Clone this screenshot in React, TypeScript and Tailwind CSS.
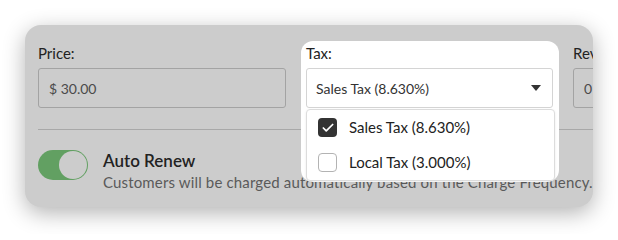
import { Check } from "lucide-react";

function Field({ label, value }: { label: string; value: string }) {
  return (
    <div className="w-[248px] shrink-0">
      <div className="h-[20px] mb-[5px] text-[15px] leading-[20px] text-[#222222]">{label}</div>
      <div className="h-[40px] flex items-center px-[10px] border border-[#a3a3a3] rounded-[3px] text-[14px] text-[#4a4a4a]">
        {value}
      </div>
    </div>
  );
}

function Option({ label, checked }: { label: string; checked?: boolean }) {
  return (
    <div className="h-[35px] flex items-center gap-[12px] pl-[11px]">
      {checked ? (
        <span className="w-[19px] h-[19px] rounded-[4px] bg-[#333333] flex items-center justify-center">
          <Check size={14} strokeWidth={3} className="text-white" />
        </span>
      ) : (
        <span className="w-[19px] h-[19px] rounded-[4px] border border-[#b3b3b3] bg-white" />
      )}
      <span className="text-[15px] text-[#222222]">{label}</span>
    </div>
  );
}

export default function App() {
  return (
    <div className="w-[618px] h-[234px] bg-white pt-[25px] pl-[25px] font-['Lato',sans-serif]">
      <div className="w-[568px] h-[182px] overflow-hidden rounded-[16px] bg-[#cccccc] shadow-[0_6px_22px_rgba(0,0,0,0.3)] pl-[13px] pt-[18px]">
        <div className="flex gap-[20px]">
          <Field label="Price:" value="$ 30.00" />

          <div className="relative w-[247px] shrink-0">
            <div className="absolute -left-[5px] -top-[2px] w-[258px] h-[141px] rounded-[12px] bg-white" />
            <div className="relative">
              <div className="h-[20px] mb-[5px] text-[15px] leading-[20px] text-[#222222]">Tax:</div>
              <div className="h-[40px] flex items-center justify-between pl-[9px] pr-[11px] border border-[#d4d4d4] rounded-[3px] text-[14px] text-[#333333]">
                <span>Sales Tax (8.630%)</span>
                <svg width="10" height="6" viewBox="0 0 10 6">
                  <path d="M0 0h10L5 6z" fill="#333333" />
                </svg>
              </div>
              <div className="absolute left-0 top-full mt-px w-[249px] h-[72px] rounded-[4px] border border-[#dcdcdc] bg-white shadow-[0_1px_3px_rgba(0,0,0,0.08)]">
                <Option label="Sales Tax (8.630%)" checked />
                <Option label="Local Tax (3.000%)" />
              </div>
            </div>
          </div>

          <Field label="Revenue:" value="0" />
        </div>

        <div className="mt-[21px] h-px bg-[#a8a8a8]" />

        <div className="mt-[20px] flex gap-[15px]">
          <div className="w-[50px] h-[30px] shrink-0 rounded-full bg-[#62a062] flex items-center justify-end pr-px">
            <span className="w-[28px] h-[28px] rounded-full bg-[#cccccc]" />
          </div>
          <div className="whitespace-nowrap">
            <div className="text-[17px] leading-[22px] font-semibold text-[#222222]">Auto Renew</div>
            <div className="text-[15px] leading-[20px] tracking-[0.15px] text-[#5a5a5a]">
              Customers will be charged automatically based on the Charge Frequency.
            </div>
          </div>
        </div>
      </div>
    </div>
  );
}
